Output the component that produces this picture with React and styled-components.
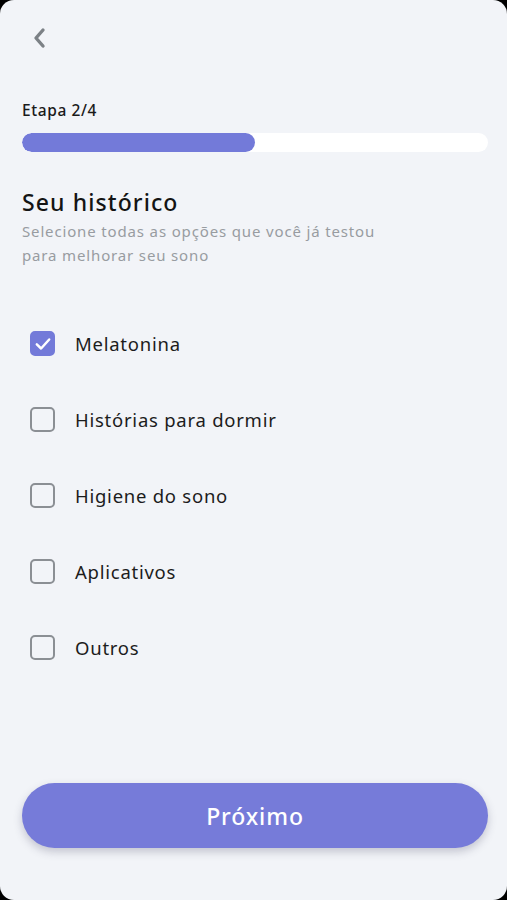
import React, { useState } from "react";
import styled, { createGlobalStyle } from "styled-components";

const Global = createGlobalStyle`
  html, body { margin: 0; padding: 0; background: #000; }
  body { font-family: "Noto Sans", "Liberation Sans", sans-serif; }
  * { box-sizing: border-box; }
`;

const Screen = styled.div`
  width: 507px;
  height: 900px;
  background: #f2f4f8;
  border-radius: 14px;
  padding: 0 19px 0 22px;
  display: flex;
  flex-direction: column;
  overflow: hidden;
`;

const BackButton = styled.button`
  border: none;
  background: none;
  padding: 0;
  margin: 27px 0 0 6px;
  width: 22px;
  height: 22px;
  display: flex;
  align-items: center;
  justify-content: center;
  color: #7c8186;
  cursor: pointer;
`;

const StepLabel = styled.div`
  margin-top: 51px;
  font-size: 15.5px;
  font-weight: 500;
  letter-spacing: 0.6px;
  color: #1a1a1a;
  line-height: 20px;
`;

const Track = styled.div`
  margin-top: 13px;
  height: 19px;
  border-radius: 10px;
  background: #ffffff;
  overflow: hidden;
`;

const Fill = styled.div`
  height: 100%;
  border-radius: 10px;
  background: #737ad9;
`;

const Title = styled.h1`
  margin: 35px 0 0;
  font-size: 23px;
  font-weight: 500;
  letter-spacing: 1.1px;
  color: #141414;
  line-height: 30px;
`;

const Subtitle = styled.p`
  margin: 2px 0 0;
  width: 385px;
  font-size: 15px;
  letter-spacing: 0.85px;
  line-height: 24px;
  color: #989ca1;
`;

const Options = styled.div`
  margin-top: 64px;
  display: flex;
  flex-direction: column;
  gap: 51px;
`;

const Row = styled.label`
  display: flex;
  align-items: center;
  gap: 20px;
  padding-left: 8px;
  height: 25px;
  cursor: pointer;
`;

const Box = styled.span`
  width: 25px;
  height: 25px;
  border-radius: 5px;
  border: 2px solid ${(p) => (p.$checked ? "#737ad9" : "#8b8f94")};
  background: ${(p) => (p.$checked ? "#737ad9" : "transparent")};
  display: flex;
  align-items: center;
  justify-content: center;
  color: #fff;
`;

const Label = styled.span`
  font-size: 18.5px;
  letter-spacing: 0.75px;
  color: #1c1c1c;
  line-height: 24px;
`;

const Spacer = styled.div`
  flex: 1;
`;

const NextButton = styled.button`
  margin-bottom: 52px;
  height: 65px;
  width: 466px;
  border: none;
  border-radius: 33px;
  background: #767bd9;
  color: #fff;
  font-family: inherit;
  font-size: 23px;
  font-weight: 500;
  letter-spacing: 0.9px;
  box-shadow: 0 4px 8px rgba(60, 60, 90, 0.25);
  cursor: pointer;
`;

const options = ["Melatonina", "Histórias para dormir", "Higiene do sono", "Aplicativos", "Outros"];

export default function App() {
  const [checked, setChecked] = useState({ Melatonina: true });
  return (
    <Screen>
      <Global />
      <BackButton aria-label="Voltar">
        <svg width="14" height="22" viewBox="0 0 14 22" fill="none">
          <path d="M11 3 L4 11 L11 19" stroke="currentColor" strokeWidth="3.4" strokeLinecap="round" strokeLinejoin="round" />
        </svg>
      </BackButton>
      <StepLabel>Etapa 2/4</StepLabel>
      <Track>
        <Fill style={{ width: "50%" }} />
      </Track>
      <Title>Seu histórico</Title>
      <Subtitle>Selecione todas as opções que você já testou para melhorar seu sono</Subtitle>
      <Options>
        {options.map((o) => (
          <Row key={o} onClick={() => setChecked((c) => ({ ...c, [o]: !c[o] }))}>
            <Box $checked={!!checked[o]}>
              {checked[o] && (
                <svg width="18" height="18" viewBox="0 0 16 16" fill="none">
                  <path d="M2.5 8.3 L6.3 12 L13.5 4" stroke="currentColor" strokeWidth="2.2" strokeLinecap="round" strokeLinejoin="round" />
                </svg>
              )}
            </Box>
            <Label>{o}</Label>
          </Row>
        ))}
      </Options>
      <Spacer />
      <NextButton>Próximo</NextButton>
    </Screen>
  );
}
